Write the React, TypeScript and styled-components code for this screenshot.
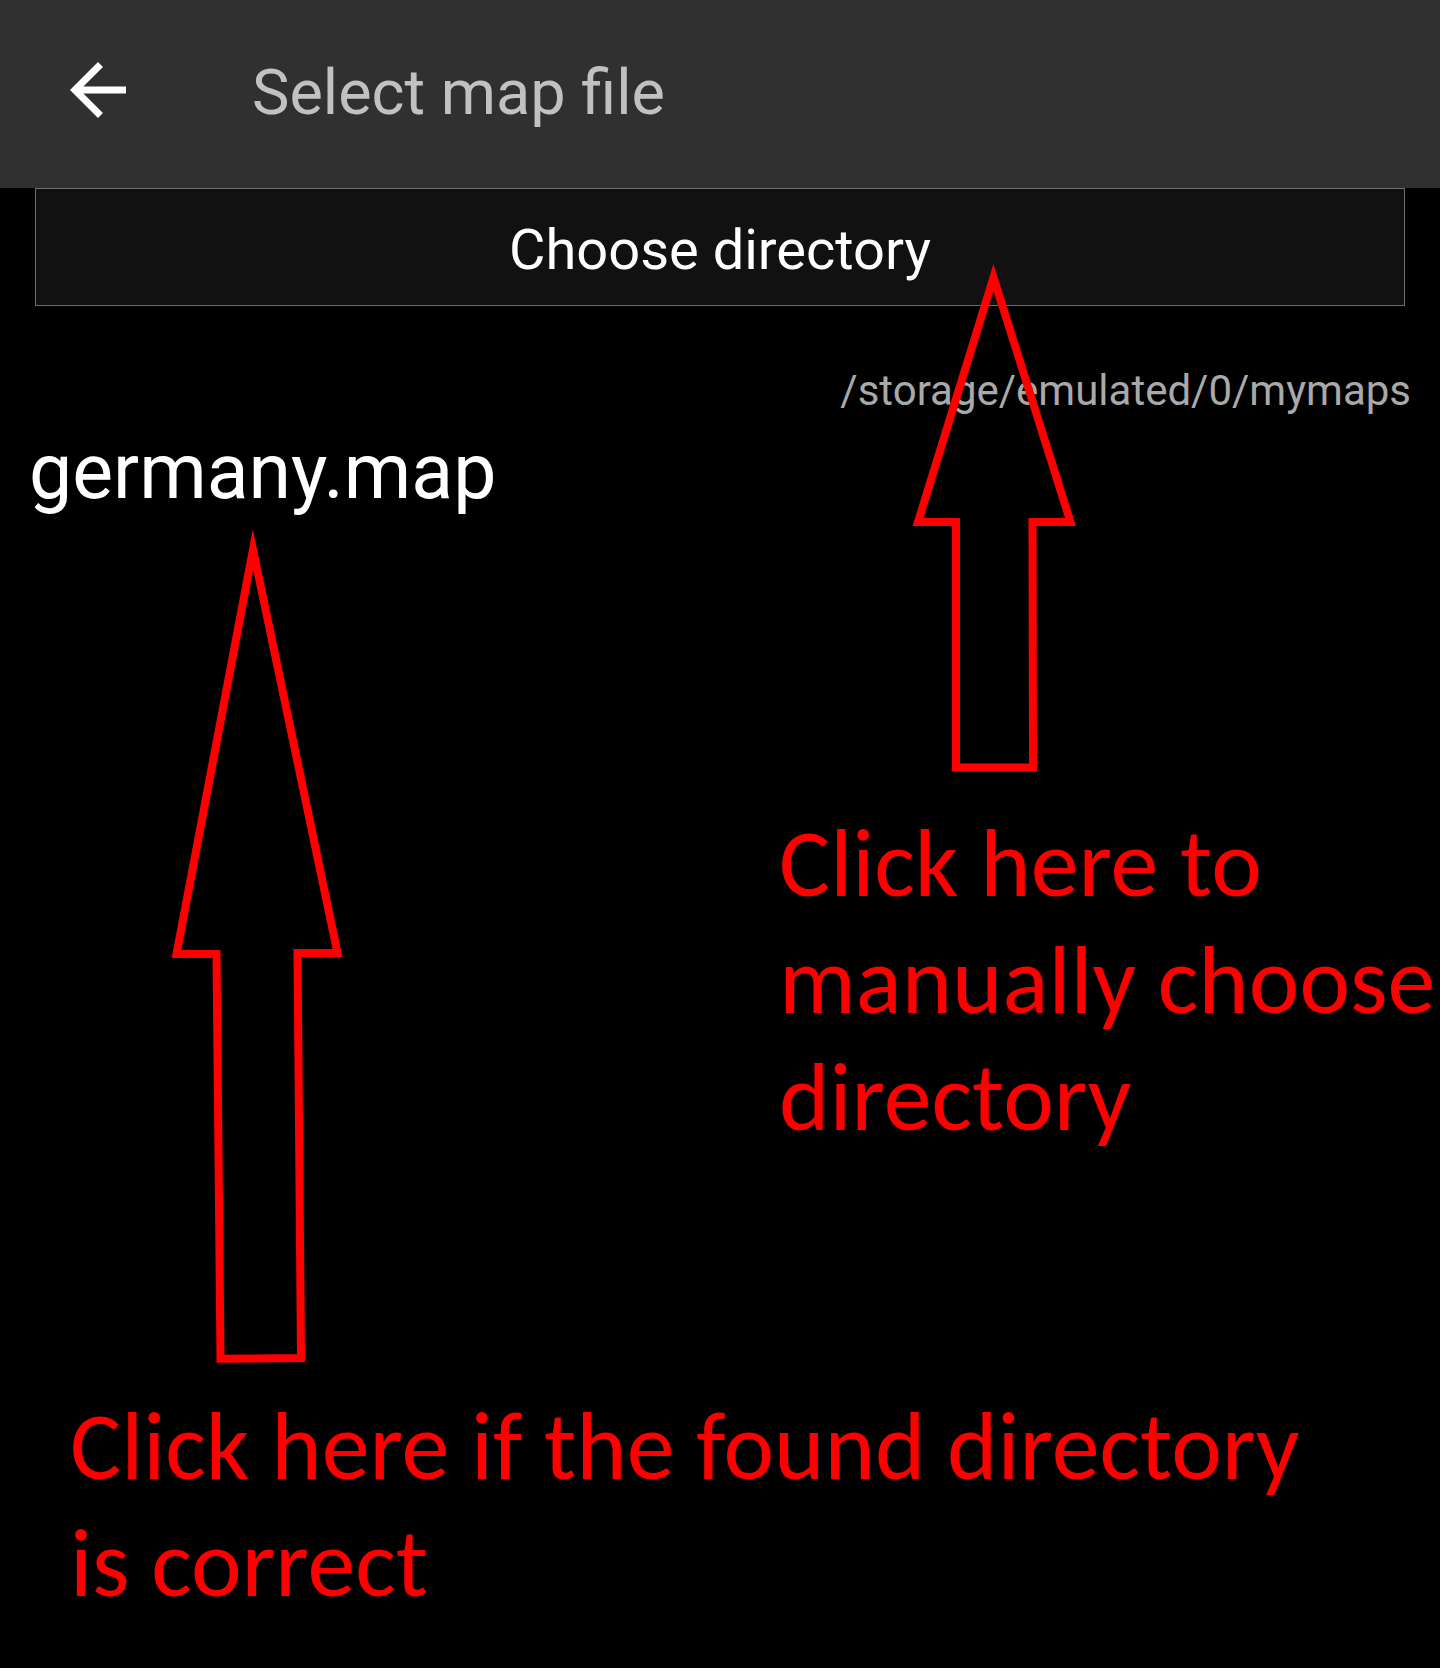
import React from "react";
import styled, { createGlobalStyle } from "styled-components";

const GlobalStyle = createGlobalStyle`
  * { box-sizing: border-box; }
  body {
    margin: 0;
    background: #000;
    font-family: Roboto, "Liberation Sans", sans-serif;
  }
  button { font-family: inherit; cursor: pointer; }
`;

const Page = styled.div`
  min-height: 100vh;
  background: #000;
  overflow-x: hidden;
`;

const AppBar = styled.header`
  display: flex;
  align-items: center;
  gap: 112px;
  height: 188px;
  padding: 0 56px 8px;
  background: #303030;
`;

const BackButton = styled.button`
  display: flex;
  padding: 0;
  border: 0;
  background: none;
  color: #fff;
`;

const Title = styled.h1`
  margin: 0;
  padding-top: 6px;
  font-size: 63px;
  line-height: 72px;
  font-weight: 400;
  color: #c1c1c1;
`;

const Content = styled.main`
  display: flex;
  flex-direction: column;
`;

const DirectoryButton = styled.button`
  height: 118px;
  margin: 0 35px;
  padding: 6px 0 0;
  border: 1px solid #6e6e6e;
  background: #111;
  color: #fff;
  font-size: 56px;
  line-height: 64px;
`;

const CurrentPath = styled.p`
  margin: 61px 29px 0;
  font-size: 42px;
  line-height: 48px;
  text-align: right;
  color: #a9a9a9;
`;

const FileList = styled.ul`
  margin: 13px 0 0;
  padding: 0 29px;
  list-style: none;
`;

const FileButton = styled.button`
  display: block;
  padding: 0;
  border: 0;
  background: none;
  color: #fff;
  font-size: 77px;
  line-height: 88px;
`;

const Guide = styled.section`
  display: flex;
  flex-direction: column;
  gap: 232px;
  padding: 289px 0 40px;
`;

const Callout = styled.div<{ $indent: string }>`
  position: relative;
  margin-left: ${(p) => p.$indent};
`;

const CalloutText = styled.p`
  margin: 0;
  font-family: Calibri, Carlito, Lato, sans-serif;
  font-size: 96px;
  line-height: 117px;
  color: #f00;
`;

const Pointer = styled.svg<{ $left: number; $gap: number }>`
  position: absolute;
  left: ${(p) => p.$left}px;
  bottom: calc(100% + ${(p) => p.$gap}px);
  fill: none;
  stroke: #f00;
  stroke-width: 8;
  stroke-miterlimit: 10;
  pointer-events: none;
`;

export default function App() {
  return (
    <Page>
      <GlobalStyle />
      <AppBar>
        <BackButton type="button" aria-label="Back">
          <svg width="84" height="84" viewBox="0 0 24 24" fill="currentColor" aria-hidden="true">
            <path d="M20 11H7.83l5.59-5.59L12 4l-8 8 8 8 1.41-1.41L7.83 13H20v-2z" />
          </svg>
        </BackButton>
        <Title>Select map file</Title>
      </AppBar>
      <Content>
        <DirectoryButton type="button">Choose directory</DirectoryButton>
        <CurrentPath>/storage/emulated/0/mymaps</CurrentPath>
        <FileList>
          <li>
            <FileButton type="button">germany.map</FileButton>
          </li>
        </FileList>
        <Guide>
          <Callout $indent="calc(50% + 59px)">
            <Pointer $left={133} $gap={33} width="166" height="508" viewBox="0 0 166 508" aria-hidden="true">
              <path d="M81.5 13.5 158.5 258H120.5L121 503.5H44V258H6Z" />
            </Pointer>
            <CalloutText>
              Click here to
              <br />
              manually choose
              <br />
              directory
            </CalloutText>
          </Callout>
          <Callout $indent="70px">
            <Pointer $left={101} $gap={25} width="172" height="834" viewBox="0 0 172 834" aria-hidden="true">
              <path d="M82 20.5 166.5 424H126.5L130 829 49.5 829.7 45.5 425H5.5Z" />
            </Pointer>
            <CalloutText>
              Click here if the found directory
              <br />
              is correct
            </CalloutText>
          </Callout>
        </Guide>
      </Content>
    </Page>
  );
}
